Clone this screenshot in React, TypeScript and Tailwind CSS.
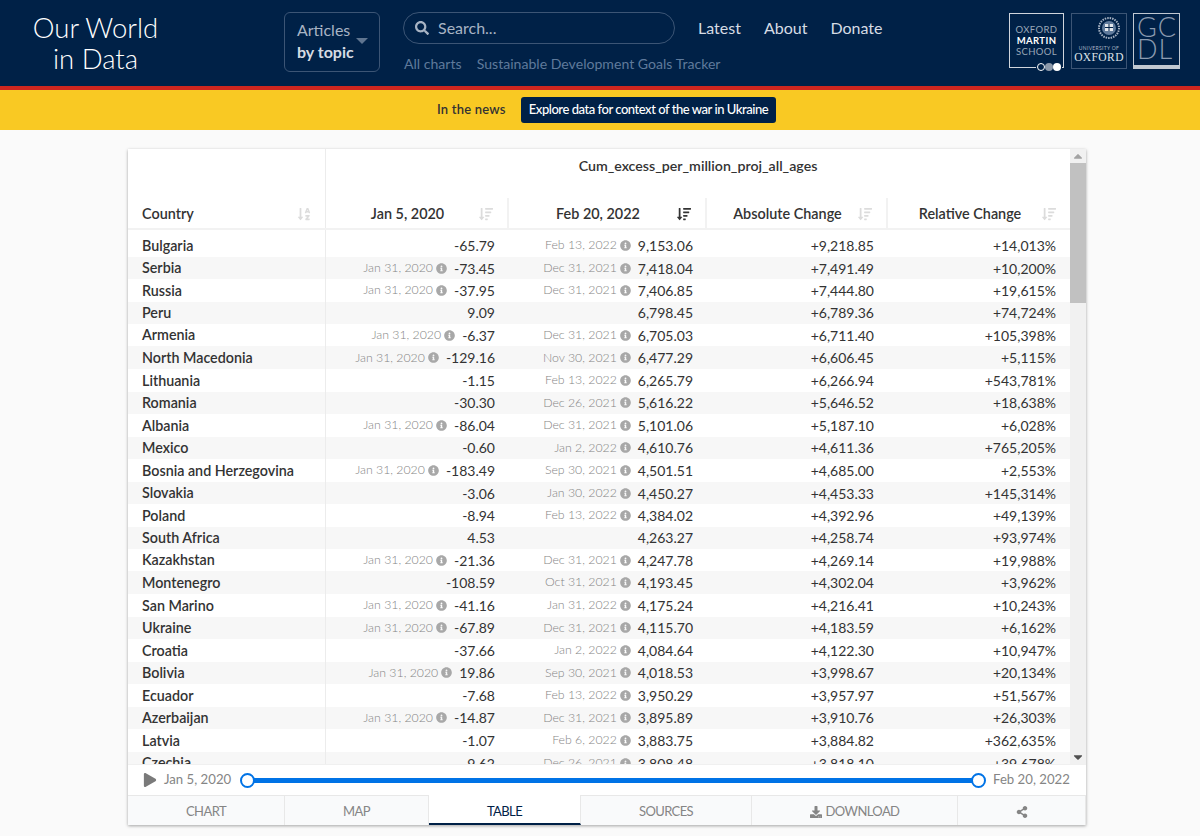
import { FaSearch, FaSortAlphaDown, FaSortAmountDown, FaInfoCircle, FaPlay, FaDownload, FaShareAlt, FaCaretUp, FaCaretDown } from "react-icons/fa";

const J = "Jan 31, 2020";
type Row = [string, string, string, string, string, string, string];
const rows: Row[] = [
  ["Bulgaria", "", "-65.79", "Feb 13, 2022", "9,153.06", "+9,218.85", "+14,013%"],
  ["Serbia", J, "-73.45", "Dec 31, 2021", "7,418.04", "+7,491.49", "+10,200%"],
  ["Russia", J, "-37.95", "Dec 31, 2021", "7,406.85", "+7,444.80", "+19,615%"],
  ["Peru", "", "9.09", "", "6,798.45", "+6,789.36", "+74,724%"],
  ["Armenia", J, "-6.37", "Dec 31, 2021", "6,705.03", "+6,711.40", "+105,398%"],
  ["North Macedonia", J, "-129.16", "Nov 30, 2021", "6,477.29", "+6,606.45", "+5,115%"],
  ["Lithuania", "", "-1.15", "Feb 13, 2022", "6,265.79", "+6,266.94", "+543,781%"],
  ["Romania", "", "-30.30", "Dec 26, 2021", "5,616.22", "+5,646.52", "+18,638%"],
  ["Albania", J, "-86.04", "Dec 31, 2021", "5,101.06", "+5,187.10", "+6,028%"],
  ["Mexico", "", "-0.60", "Jan 2, 2022", "4,610.76", "+4,611.36", "+765,205%"],
  ["Bosnia and Herzegovina", J, "-183.49", "Sep 30, 2021", "4,501.51", "+4,685.00", "+2,553%"],
  ["Slovakia", "", "-3.06", "Jan 30, 2022", "4,450.27", "+4,453.33", "+145,314%"],
  ["Poland", "", "-8.94", "Feb 13, 2022", "4,384.02", "+4,392.96", "+49,139%"],
  ["South Africa", "", "4.53", "", "4,263.27", "+4,258.74", "+93,974%"],
  ["Kazakhstan", J, "-21.36", "Dec 31, 2021", "4,247.78", "+4,269.14", "+19,988%"],
  ["Montenegro", "", "-108.59", "Oct 31, 2021", "4,193.45", "+4,302.04", "+3,962%"],
  ["San Marino", J, "-41.16", "Jan 31, 2022", "4,175.24", "+4,216.41", "+10,243%"],
  ["Ukraine", J, "-67.89", "Dec 31, 2021", "4,115.70", "+4,183.59", "+6,162%"],
  ["Croatia", "", "-37.66", "Jan 2, 2022", "4,084.64", "+4,122.30", "+10,947%"],
  ["Bolivia", J, "19.86", "Sep 30, 2021", "4,018.53", "+3,998.67", "+20,134%"],
  ["Ecuador", "", "-7.68", "Feb 13, 2022", "3,950.29", "+3,957.97", "+51,567%"],
  ["Azerbaijan", J, "-14.87", "Dec 31, 2021", "3,895.89", "+3,910.76", "+26,303%"],
  ["Latvia", "", "-1.07", "Feb 6, 2022", "3,883.75", "+3,884.82", "+362,635%"],
  ["Czechia", "", "9.62", "Dec 26, 2021", "3,808.48", "+3,818.10", "+39,678%"],
];

function Value({ note, value }: { note: string; value: string }) {
  return (
    <div className="flex items-center justify-end pr-[14px]">
      {note && (
        <span className="mr-[7px] flex items-center text-[12.3px] font-light text-[#858585]">
          {note}
          <FaInfoCircle className="ml-[3px] text-[11px] text-[#a8a8a8]" />
        </span>
      )}
      <span>{value}</span>
    </div>
  );
}

function Head({ label, active, border }: { label: string; active?: boolean; border?: boolean }) {
  return (
    <div className={`flex h-full items-center justify-center px-[14px] pt-[2px] ${border ? "border-r-2 border-[#f2f2f2]" : ""}`}>
      <span className="flex-1 pr-[4px] text-center">{label}</span>
      <FaSortAmountDown className={`text-[14px] ${active ? "text-[#333]" : "text-[#dcdcdc]"}`} />
    </div>
  );
}

function Tab({ w, active, children }: { w: string; active?: boolean; children: React.ReactNode }) {
  return (
    <div className={`flex items-center justify-center border-r border-[#e8e8e8] ${w} ${active ? "border-b-2 border-b-[#002147] bg-white pt-[5px] text-[#002147]" : "border-t border-t-[#e8e8e8] bg-[#f9fafb] pt-[2px] text-[#858585]"}`}>
      {children}
    </div>
  );
}

export default function App() {
  return (
    <div className="min-h-[836px] bg-[#fafafa] font-['Lato',sans-serif] text-[14px] text-[#333]">
      <header className="flex h-[86px] items-start bg-[#002147]">
        <div className="ml-[33px] mt-[12px] flex w-[125px] flex-col items-center text-[27.5px] font-light leading-[31px] text-white">
          <span className="whitespace-nowrap">Our World</span>
          <span>in Data</span>
        </div>
        <div className="ml-[126px] mt-[12px] h-[60px] w-[96px] rounded-md border border-[#3c5575] pl-[12px] pt-[6px] text-[16px] leading-[22px] text-[#a8b4c4]">
          <div className="relative">
            Articles
            <span className="absolute left-[59px] top-[19px] h-0 w-0 border-x-[6px] border-t-[6px] border-x-transparent border-t-[#5f7590]" />
          </div>
          <div className="font-bold text-[#d6dce4]">by topic</div>
        </div>
        <div className="ml-[23px] mt-[12px] flex flex-col">
          <div className="flex items-start">
            <div className="flex h-[32px] w-[272px] items-center rounded-full border border-[#3c5575] pl-[11px] text-[16px] text-[#a8b4c4]">
              <FaSearch className="mr-[9px] text-[14px] text-[#a8b4c4]" />
              Search...
            </div>
            <nav className="ml-[23px] flex h-[32px] items-center gap-[23px] text-[16px] text-[#d6dce4]">
              <span>Latest</span>
              <span>About</span>
              <span>Donate</span>
            </nav>
          </div>
          <div className="ml-px mt-[9px] flex gap-[15px] text-[14.1px] text-[#5f7a9b]">
            <span>All charts</span>
            <span>Sustainable Development Goals Tracker</span>
          </div>
        </div>
        <div className="ml-auto mr-[20px] mt-[13px] flex items-start">
          <div className="relative flex h-[55px] w-[55px] flex-col items-center border border-[#d0d5dc] pt-[10px] text-[9.5px] leading-[11px] tracking-[0.4px] text-[#9aa7b8]">
            <span>OXFORD</span>
            <span className="font-bold text-white">MARTIN</span>
            <span>SCHOOL</span>
            <div className="absolute -bottom-[4px] left-[26px] flex items-center bg-[#002147] px-[1px]">
              <span className="h-[8px] w-[8px] rounded-full border border-white" />
              <span className="h-[8px] w-[8px] rounded-full bg-[#8c99aa]" />
              <span className="h-[8px] w-[8px] rounded-full bg-white" />
            </div>
          </div>
          <div className="ml-[7px] flex h-[56px] w-[56px] flex-col items-center border border-[#3c5575]">
            <svg viewBox="0 0 24 24" className="ml-[20px] mt-[2px] h-[24px] w-[24px]">
              <circle cx="12" cy="12" r="10" fill="none" stroke="#a8b4c4" strokeWidth="2" strokeDasharray="1.5 1" />
              <circle cx="12" cy="12" r="7" fill="#5f7a9b" />
              <rect x="8" y="8" width="8" height="7" fill="#e4e8ed" />
              <path d="M8 11.5h8M12 8v7" stroke="#002147" strokeWidth="1" />
            </svg>
            <span className="mt-[5px] text-[5px] leading-[6px] tracking-[0.3px] text-[#a8b4c4]">UNIVERSITY OF</span>
            <span className="font-['Liberation_Serif',serif] text-[11.5px] leading-[12px] tracking-[0.4px] text-[#dfe3e8]">OXFORD</span>
          </div>
          <div className="ml-[6px] flex h-[56px] w-[47px] flex-col border border-b-[4px] border-[#c0c8d2] pl-[3px] pt-[2px] text-[27px] font-light leading-[22px] tracking-[1px] text-[#8c9bb0]">
            <span>GC</span>
            <span>DL</span>
          </div>
        </div>
      </header>
      <div className="h-[4px] bg-[#ce261e]" />
      <div className="flex h-[40px] items-center bg-[#f9c923] pl-[437px] text-[13px]">
        <span className="w-[69px] whitespace-nowrap font-semibold tracking-[0.2px] text-[#333]">In the news</span>
        <span className="ml-[15px] flex h-[26px] w-[255px] items-center justify-center rounded-[3px] bg-[#002147] font-medium tracking-[-0.46px] text-white">
          Explore data for context of the war in Ukraine
        </span>
      </div>
      <main className="ml-[128px] mt-[19px] w-[958px] bg-white shadow-[0_1px_3px_rgba(0,0,0,0.35)]">
        <div className="flex h-[615px]">
          <div className="w-[942px] overflow-hidden">
            <div className="grid h-[49px] grid-cols-[198px_744px]">
              <div className="border-r border-[#ececec]" />
              <div className="pt-[8px] text-center text-[14.2px] font-semibold leading-[17px]">Cum_excess_per_million_proj_all_ages</div>
            </div>
            <div className="grid h-[32px] grid-cols-[198px_183px_198px_181px_182px] border-b-2 border-[#f2f2f2] text-[14.4px] font-semibold">
              <div className="flex items-center justify-between border-r border-[#ececec] px-[14px] pt-[2px]">
                <span>Country</span>
                <FaSortAlphaDown className="text-[14px] text-[#dcdcdc]" />
              </div>
              <Head label="Jan 5, 2020" border />
              <Head label="Feb 20, 2022" border active />
              <Head label="Absolute Change" border />
              <Head label="Relative Change" />
            </div>
            <div className="h-[4.3px] w-[198px] border-r border-[#ececec]" />
            {rows.map((r, i) => (
              <div
                key={r[0]}
                className={`grid grid-cols-[198px_183px_198px_181px_182px] items-center ${r[1] || r[3] ? "h-[22.55px]" : "h-[22px]"} ${i % 2 ? "bg-[#f7f7f7]" : ""}`}
              >
                <div className="flex h-full items-center border-r border-[#ececec] pl-[14px] text-[14.3px] font-semibold">{r[0]}</div>
                <Value note={r[1]} value={r[2]} />
                <Value note={r[3]} value={r[4]} />
                <Value note="" value={r[5]} />
                <Value note="" value={r[6]} />
              </div>
            ))}
          </div>
          <div className="flex w-[16px] flex-col items-center bg-[#f1f1f1] text-[#6e6e6e]">
            <FaCaretUp className="h-[14px] text-[10px] text-[#a3a3a3]" />
            <div className="h-[140px] w-full bg-[#c1c1c1]" />
            <div className="flex-1" />
            <FaCaretDown className="h-[14px] text-[10px] text-[#505050]" />
          </div>
        </div>
        <div className="flex h-[31px] items-center border-t border-[#f0f0f0] pl-[15px] text-[13.2px] text-[#858585]">
          <FaPlay className="text-[14px] text-[#7a7a7a]" />
          <span className="ml-[7px] w-[68px] whitespace-nowrap">Jan 5, 2020</span>
          <div className="ml-[8px] flex w-[746px] items-center">
            <span className="z-10 h-[15px] w-[15px] shrink-0 rounded-full border-2 border-[#0073e6] bg-white" />
            <span className="-mx-[1px] h-[5px] flex-1 bg-[#0073e6]" />
            <span className="z-10 h-[15px] w-[15px] shrink-0 rounded-full border-2 border-[#0073e6] bg-white" />
          </div>
          <span className="ml-[7px]">Feb 20, 2022</span>
        </div>
        <div className="flex h-[30px] text-[13px] tracking-[-0.6px]">
          <Tab w="w-[157px]">CHART</Tab>
          <Tab w="w-[144px]">MAP</Tab>
          <Tab w="w-[152px]" active>TABLE</Tab>
          <Tab w="w-[171px]">SOURCES</Tab>
          <Tab w="w-[206px]"><FaDownload className="mr-[4px] text-[12px]" />DOWNLOAD</Tab>
          <Tab w="w-[128px]"><FaShareAlt className="text-[12px]" /></Tab>
        </div>
      </main>
    </div>
  );
}
